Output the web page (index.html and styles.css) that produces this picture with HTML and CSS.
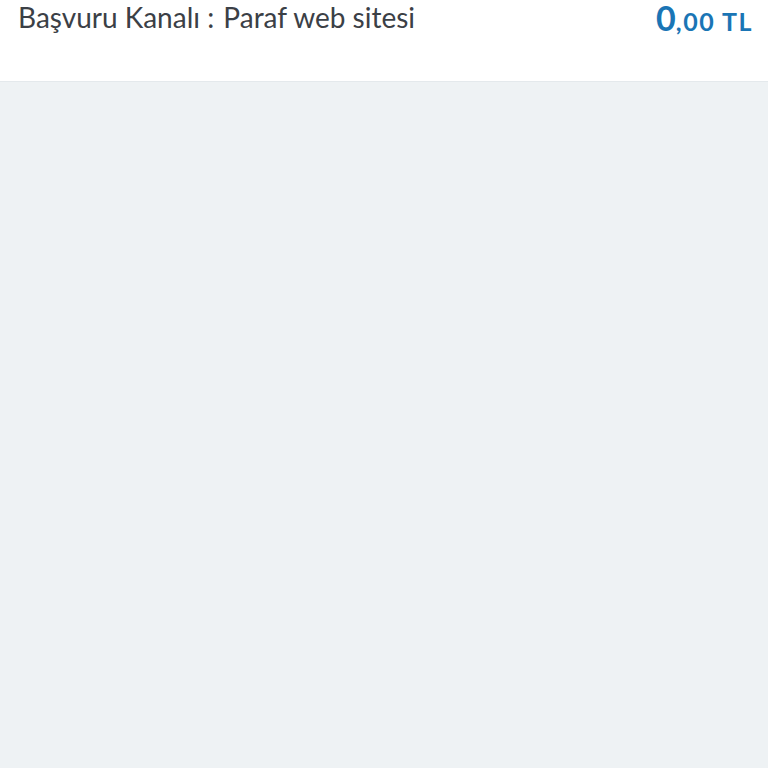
FILE: index.html
```html
<!DOCTYPE html>
<html>
    <head>
        <title>Başvuru</title>
        <link rel="stylesheet" href="styles.css">
    </head>
    <body>
        <div class="header">
            <div class="channel">
                <span class="label">Başvuru Kanalı :</span>
                <span class="value">Paraf web sitesi</span>
            </div>
            <div class="amount">
                <span class="big">0</span><span class="small">,00 TL</span>
            </div>
        </div>
        <div class="content"></div>
    </body>
</html>
```
FILE: styles.css
```css
html, body {
    height: 100%;
    margin: 0;
    overflow: hidden;
    background: #eef2f4;
    font-family: Lato, "Open Sans", sans-serif;
}

.header {
    height: 81px;
    background: #fff;
    border-bottom: 1px solid #e4e9ec;
    display: flex;
    justify-content: space-between;
    align-items: flex-start;
    padding: 0 15px 0 18px;
}

.channel {
    font-size: 28px;
    line-height: 34px;
    color: #3b4046;
}

.label {
    margin-right: 2px;
}

.amount {
    line-height: 35px;
    color: #1a75b5;
    font-weight: bold;
}

.big {
    font-size: 34px;
}

.small {
    font-size: 25px;
    letter-spacing: 1.5px;
}
```
